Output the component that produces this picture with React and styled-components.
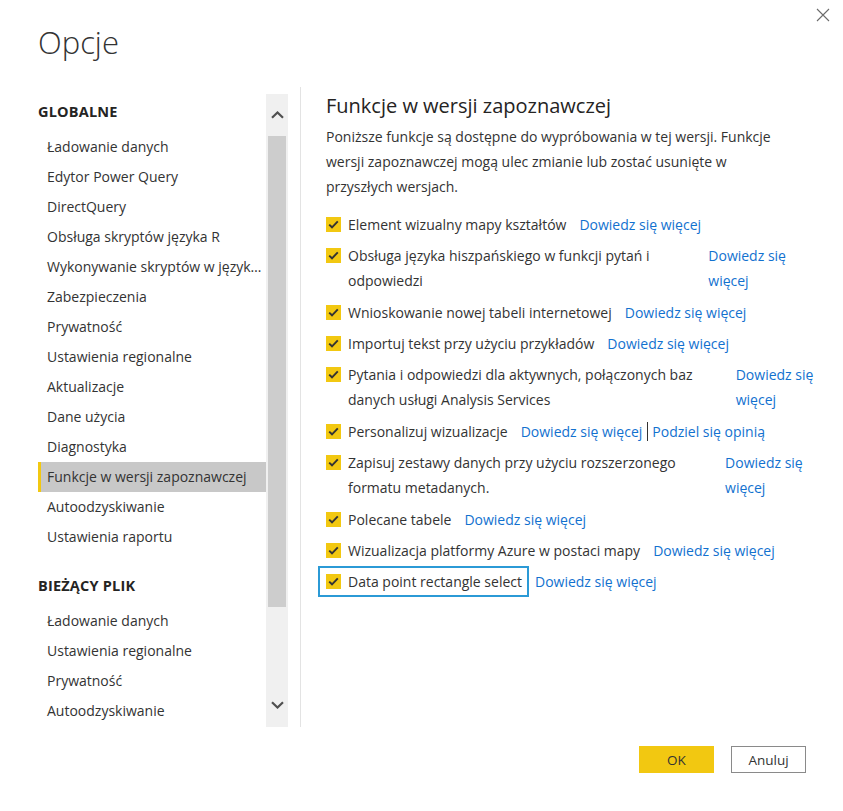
import React from "react";
import styled, { createGlobalStyle } from "styled-components";

const colors = {
  text: "#2d2d2d",
  link: "#1271cf",
  yellow: "#f2c811",
  focus: "#2b9ad6",
  track: "#f0f0f0",
  thumb: "#cdcdcd",
  selected: "#c8c8c8",
  divider: "#e3e3e3",
};

const GlobalStyle = createGlobalStyle`
  html, body {
    margin: 0;
    padding: 0;
    background: #ffffff;
  }
  body {
    font-family: "Segoe UI", "Open Sans", "Noto Sans", sans-serif;
    color: ${colors.text};
  }
`;

const Dialog = styled.div`
  position: relative;
  width: 843px;
  height: 811px;
  box-sizing: border-box;
  display: flex;
  flex-direction: column;
  overflow: hidden;
`;

const CloseButton = styled.button`
  position: absolute;
  top: 8px;
  right: 12px;
  width: 16px;
  height: 16px;
  padding: 0;
  border: none;
  background: none;
  cursor: pointer;
`;

const Title = styled.h1`
  margin: 0;
  padding: 21px 0 0 38px;
  height: 94px;
  box-sizing: border-box;
  font-size: 31px;
  font-weight: 300;
  line-height: 42px;
  color: #333;
`;

const Body = styled.div`
  display: flex;
  height: 633px;
`;

const Sidebar = styled.div`
  display: flex;
  margin-left: 38px;
  height: 633px;
`;

const NavList = styled.nav`
  width: 228px;
  overflow: hidden;
`;

const SectionHeading = styled.div`
  margin: ${(p) => (p.first ? "8px" : "24px")} 0 10px 0;
  font-size: 14.5px;
  font-weight: 700;
  line-height: 20px;
  letter-spacing: 0.2px;
  color: #252423;
`;

const NavItem = styled.div`
  height: 30px;
  line-height: 30px;
  padding-left: 6px;
  border-left: 3px solid ${(p) => (p.active ? colors.yellow : "transparent")};
  background: ${(p) => (p.active ? colors.selected : "transparent")};
  font-size: 14px;
  color: #333;
  white-space: nowrap;
  overflow: hidden;
  text-overflow: ellipsis;
  cursor: pointer;
`;

const Scrollbar = styled.div`
  width: 22px;
  background: ${colors.track};
  display: flex;
  flex-direction: column;
  align-items: center;
`;

const ScrollArrow = styled.div`
  height: ${(p) => p.h}px;
  width: 22px;
  display: flex;
  align-items: center;
  justify-content: center;
`;

const ScrollThumb = styled.div`
  width: 18px;
  height: 471px;
  background: ${colors.thumb};
`;

const ScrollSpace = styled.div`
  flex: 1;
`;

const Divider = styled.div`
  width: 1px;
  margin: -7px 0 0 12px;
  background: ${colors.divider};
`;

const Content = styled.section`
  width: 494px;
  padding-left: 25px;
`;

const Heading = styled.h2`
  margin: -2px 0 4px 0;
  font-size: 20px;
  font-weight: 400;
  line-height: 28px;
  color: #252423;
`;

const Intro = styled.p`
  max-width: 468px;
  margin: 0 0 10px 0;
  font-size: 14px;
  line-height: 25px;
  color: #333;
`;

const FeatureList = styled.div`
  margin-left: -8px;
  display: flex;
  flex-direction: column;
`;

const Row = styled.div`
  display: flex;
  align-items: flex-start;
  padding-bottom: ${(p) => (p.wide ? "1px" : "0")};
`;

const CheckGroup = styled.label`
  flex: 0 1 auto;
  display: flex;
  align-items: flex-start;
  gap: 7px;
  padding: 1px 5px 1px 6px;
  border: 2px solid ${(p) => (p.focused ? colors.focus : "transparent")};
  cursor: pointer;
`;

const Box = styled.span`
  flex: none;
  width: 15px;
  height: 15px;
  margin-top: 5px;
  background: ${colors.yellow};
  display: flex;
  align-items: center;
  justify-content: center;
`;

const LabelText = styled.span`
  font-size: 14px;
  line-height: 25px;
  color: #333;
`;

const Links = styled.span`
  flex: 0 1 auto;
  margin: 3px 0 0 6px;
  font-size: 14px;
  line-height: 25px;
`;

const Link = styled.a`
  color: ${colors.link};
  text-decoration: none;
  cursor: pointer;
`;

const LinkSep = styled.span`
  display: inline-block;
  width: 1px;
  height: 19px;
  margin: 0 4px 0 5px;
  vertical-align: -4px;
  background: #333;
`;

const Footer = styled.footer`
  flex: 1;
  display: flex;
  justify-content: flex-end;
  align-items: flex-start;
  gap: 17px;
  padding: 19px 37px 0 0;
`;

const Button = styled.button`
  width: 75px;
  height: 27px;
  box-sizing: border-box;
  font-family: inherit;
  font-size: 13.5px;
  color: #333;
  background: ${(p) => (p.primary ? colors.yellow : "#fff")};
  border: ${(p) => (p.primary ? "none" : "1px solid #8a8a8a")};
  cursor: pointer;
`;

const CheckIcon = () => (
  <svg width="11" height="9" viewBox="0 0 11 9">
    <path d="M1.2 4.6 L4 7.3 L9.8 1.3" fill="none" stroke="#333" strokeWidth="1.9" />
  </svg>
);

const Chevron = ({ down }) => (
  <svg width="13" height="8" viewBox="0 0 13 8">
    <path
      d={down ? "M1 1.2 L6.5 6.5 L12 1.2" : "M1 6.8 L6.5 1.5 L12 6.8"}
      fill="none"
      stroke="#505050"
      strokeWidth="2.2"
    />
  </svg>
);

const globalItems = [
  "Ładowanie danych",
  "Edytor Power Query",
  "DirectQuery",
  "Obsługa skryptów języka R",
  "Wykonywanie skryptów w języku Python",
  "Zabezpieczenia",
  "Prywatność",
  "Ustawienia regionalne",
  "Aktualizacje",
  "Dane użycia",
  "Diagnostyka",
  "Funkcje w wersji zapoznawczej",
  "Autoodzyskiwanie",
  "Ustawienia raportu",
];

const fileItems = [
  "Ładowanie danych",
  "Ustawienia regionalne",
  "Prywatność",
  "Autoodzyskiwanie",
];

// wide = opis zawija się do dwóch linii
const features = [
  { label: "Element wizualny mapy kształtów" },
  { label: "Obsługa języka hiszpańskiego w funkcji pytań i odpowiedzi", wide: true },
  { label: "Wnioskowanie nowej tabeli internetowej" },
  { label: "Importuj tekst przy użyciu przykładów" },
  {
    label: "Pytania i odpowiedzi dla aktywnych, połączonych baz danych usługi Analysis Services",
    wide: true,
  },
  { label: "Personalizuj wizualizacje", feedback: true },
  {
    label: "Zapisuj zestawy danych przy użyciu rozszerzonego formatu metadanych.",
    wide: true,
  },
  { label: "Polecane tabele" },
  { label: "Wizualizacja platformy Azure w postaci mapy" },
  { label: "Data point rectangle select", focused: true },
];

export default function App() {
  return (
    <Dialog>
      <GlobalStyle />
      <CloseButton aria-label="Zamknij">
        <svg width="14" height="14" viewBox="0 0 14 14">
          <path d="M1 1 L13 13 M13 1 L1 13" stroke="#6b6b6b" strokeWidth="1.1" />
        </svg>
      </CloseButton>

      <Title>Opcje</Title>

      <Body>
        <Sidebar>
          <NavList>
            <SectionHeading first>GLOBALNE</SectionHeading>
            {globalItems.map((item) => (
              <NavItem key={item} active={item === "Funkcje w wersji zapoznawczej"}>
                {item}
              </NavItem>
            ))}
            <SectionHeading>BIEŻĄCY PLIK</SectionHeading>
            {fileItems.map((item) => (
              <NavItem key={item}>{item}</NavItem>
            ))}
          </NavList>
          <Scrollbar>
            <ScrollArrow h={42}>
              <Chevron />
            </ScrollArrow>
            <ScrollThumb />
            <ScrollSpace />
            <ScrollArrow h={44}>
              <Chevron down />
            </ScrollArrow>
          </Scrollbar>
        </Sidebar>

        <Divider />

        <Content>
          <Heading>Funkcje w wersji zapoznawczej</Heading>
          <Intro>
            Poniższe funkcje są dostępne do wypróbowania w tej wersji. Funkcje
            wersji zapoznawczej mogą ulec zmianie lub zostać usunięte w
            przyszłych wersjach.
          </Intro>

          <FeatureList>
            {features.map((f) => (
              <Row key={f.label} wide={f.wide}>
                <CheckGroup focused={f.focused}>
                  <Box>
                    <CheckIcon />
                  </Box>
                  <LabelText>{f.label}</LabelText>
                </CheckGroup>
                <Links>
                  <Link>Dowiedz się więcej</Link>
                  {f.feedback && (
                    <>
                      <LinkSep />
                      <Link>Podziel się opinią</Link>
                    </>
                  )}
                </Links>
              </Row>
            ))}
          </FeatureList>
        </Content>
      </Body>

      <Footer>
        <Button primary>OK</Button>
        <Button>Anuluj</Button>
      </Footer>
    </Dialog>
  );
}
